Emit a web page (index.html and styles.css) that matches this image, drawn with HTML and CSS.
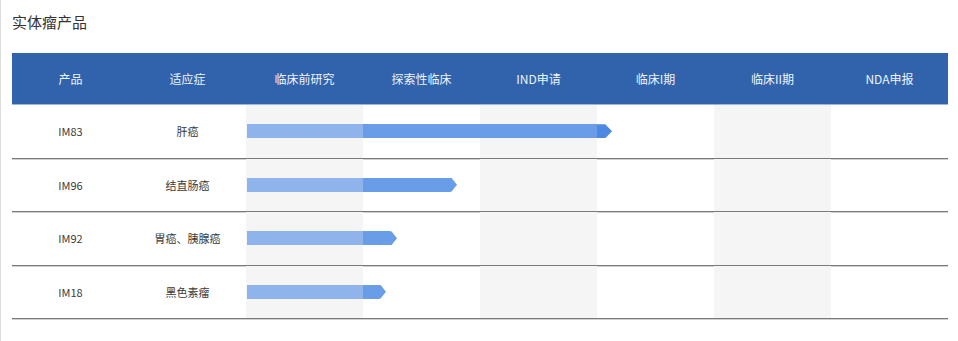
FILE: index.html
```html
<!DOCTYPE html>
<html lang="zh-CN">
<head>
  <meta charset="UTF-8">
  <title>实体瘤产品</title>
  <link rel="stylesheet" href="styles.css">
</head>
<body>
  <div class="page">
    <h2 class="title">实体瘤产品</h2>

    <div class="pipeline">
      <div class="head-row">
        <div>产品</div>
        <div>适应症</div>
        <div>临床前研究</div>
        <div>探索性临床</div>
        <div>IND申请</div>
        <div>临床I期</div>
        <div>临床II期</div>
        <div>NDA申报</div>
      </div>

      <div class="row">
        <div class="cell">IM83</div>
        <div class="cell">肝癌</div>
        <div class="cell shade c3"></div>
        <div class="cell shade c5"></div>
        <div class="cell shade c7"></div>
        <div class="bar" style="width: 365px">
          <span class="seg-pre"></span>
          <span class="seg-rest"></span>
          <span class="tip tip-ind"></span>
        </div>
      </div>

      <div class="row">
        <div class="cell">IM96</div>
        <div class="cell">结直肠癌</div>
        <div class="cell shade c3"></div>
        <div class="cell shade c5"></div>
        <div class="cell shade c7"></div>
        <div class="bar" style="width: 210px">
          <span class="seg-pre"></span>
          <span class="seg-rest"></span>
          <span class="tip"></span>
        </div>
      </div>

      <div class="row">
        <div class="cell">IM92</div>
        <div class="cell">胃癌、胰腺癌</div>
        <div class="cell shade c3"></div>
        <div class="cell shade c5"></div>
        <div class="cell shade c7"></div>
        <div class="bar" style="width: 150px">
          <span class="seg-pre"></span>
          <span class="seg-rest"></span>
          <span class="tip"></span>
        </div>
      </div>

      <div class="row">
        <div class="cell">IM18</div>
        <div class="cell">黑色素瘤</div>
        <div class="cell shade c3"></div>
        <div class="cell shade c5"></div>
        <div class="cell shade c7"></div>
        <div class="bar" style="width: 139px">
          <span class="seg-pre"></span>
          <span class="seg-rest"></span>
          <span class="tip"></span>
        </div>
      </div>
    </div>
  </div>
</body>
</html>
```

FILE: styles.css
```css
body {
  margin: 0;
  background: #fff;
  font-family: "Noto Sans CJK SC", "Noto Sans", sans-serif;
  color: #333;
}
.page {
  border-left: 1px solid #dcdcdc;
  padding: 11px 0 22px 11px;
  min-height: 308px;
}
.title {
  margin: 0 0 21px;
  font-size: 15px;
  font-weight: normal;
  line-height: 21px;
  color: #333;
}
.pipeline {
  width: 936px;
}
.head-row {
  display: grid;
  grid-template-columns: repeat(8, 117px);
  height: 52px;
  background: #3163ad;
  border-bottom: 1px solid #9db6dc;
  box-sizing: border-box;
}
.head-row div {
  display: flex;
  align-items: center;
  justify-content: center;
  color: #eef3fa;
  font-size: 12px;
}
.row {
  display: grid;
  grid-template-columns: repeat(8, 117px);
  height: 53.5px;
  box-sizing: border-box;
  border-bottom: 1px solid #7a7a7a;
  box-shadow: 0 1px 0 #d0d0d0;
}
.cell {
  grid-row: 1;
  display: flex;
  align-items: center;
  justify-content: center;
  font-size: 11px;
  color: #3a3a3a;
}
.shade {
  background: #f5f5f5;
}
.c3 { grid-column: 3; }
.c5 { grid-column: 5; }
.c7 { grid-column: 7; }

/* progress arrow runs across the stage columns */
.bar {
  grid-row: 1;
  grid-column: 3 / 9;
  align-self: center;
  display: flex;
  height: 14px;
  margin-left: 1px;
  z-index: 1;
}
.seg-pre {
  flex: 0 0 116px;
  background: #8eb4eb;
}
.seg-rest {
  flex: 1;
  background: #6a9de7;
}
.tip {
  flex: 0 0 7px;
  background: #6a9de7;
  clip-path: polygon(0 0, 20% 0, 100% 50%, 20% 100%, 0 100%);
}
.tip-ind {
  flex: 0 0 15px;
  background: #4d89e2;
  clip-path: polygon(0 0, 55% 0, 100% 50%, 55% 100%, 0 100%);
}
```
